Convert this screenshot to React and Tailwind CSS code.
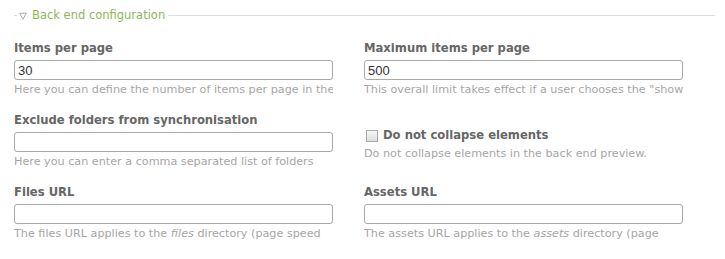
export default function App() {
  const label = "block text-[11.6px] font-bold text-[#666] leading-[15px] whitespace-nowrap";
  const input = "block w-[319px] h-[20px] mt-[4px] border border-[#aaa] rounded-[3px] bg-white px-[3px] text-[13px] text-[#333] [font-family:'Liberation_Sans',Arial,sans-serif] outline-none";
  const desc = "mt-[3px] text-[11.2px] text-[#a6a6a6] leading-[14px] whitespace-nowrap overflow-hidden";
  return (
    <div className="w-[725px] h-[259px] bg-white [font-family:'DejaVu_Sans',Verdana,sans-serif] relative overflow-hidden">
      <div className="flex items-center pt-[7px] pl-[14px] pr-[10px]">
        <div className="w-[3px] h-px bg-[#ddd]" />
        <div className="flex items-center pl-[2px] pr-[3px] text-[11.5px] text-[#8ab858] leading-[16px]">
          <svg width="8" height="8" viewBox="0 0 8 8" className="mr-[5px] mt-[1px]">
            <path d="M0.7 1.2 H7.3 L4 7.2 Z" fill="none" stroke="#aaa" strokeWidth="1" strokeLinejoin="round" />
          </svg>
          <span>Back end configuration</span>
        </div>
        <div className="flex-1 h-px bg-[#ddd]" />
      </div>
      <div className="grid grid-cols-[319px_319px] gap-x-[31px] pl-[14px] pt-[18px]">
        <div className="h-[72px]">
          <label className={label}>Items per page</label>
          <input className={input} defaultValue="30" />
          <div className={desc}>Here you can define the number of items per page in the</div>
        </div>
        <div className="h-[72px]">
          <label className={label}>Maximum items per page</label>
          <input className={input} defaultValue="500" />
          <div className={desc}>This overall limit takes effect if a user chooses the "show</div>
        </div>
        <div className="h-[72px]">
          <label className={label}>Exclude folders from synchronisation</label>
          <input className={input} defaultValue="" />
          <div className={desc}>Here you can enter a comma separated list of folders</div>
        </div>
        <div className="h-[72px] pt-[15px]">
          <div className="flex items-center">
            <span className="w-[12px] h-[12px] border border-[#aaa] bg-gradient-to-b from-[#f6f6f6] to-[#ddd] ml-[2px] mr-[5px]" />
            <span className={label}>Do not collapse elements</span>
          </div>
          <div className="mt-[4px] text-[11.2px] text-[#a6a6a6] leading-[14px] whitespace-nowrap">Do not collapse elements in the back end preview.</div>
        </div>
        <div className="h-[72px]">
          <label className={label}>Files URL</label>
          <input className={input} defaultValue="" />
          <div className={desc}>The files URL applies to the <i>files</i> directory (page speed</div>
        </div>
        <div className="h-[72px]">
          <label className={label}>Assets URL</label>
          <input className={input} defaultValue="" />
          <div className={desc}>The assets URL applies to the <i>assets</i> directory (page</div>
        </div>
      </div>
    </div>
  );
}
